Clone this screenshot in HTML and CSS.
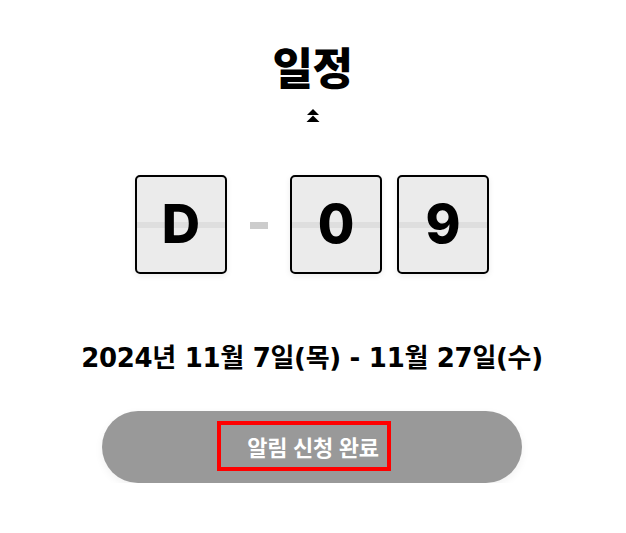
FILE: index.html
```html
<!DOCTYPE html>
<html lang="ko">
<head>
<meta charset="utf-8">
<link rel="stylesheet" href="styles.css">
</head>
<body>
<main class="schedule">
  <h1 class="title">일정</h1>
  <svg class="chevrons" width="14" height="14" viewBox="0 0 14 14" aria-hidden="true">
    <polygon points="7,0 13,6 1,6" fill="#000"/>
    <polygon points="7,6.5 13.5,13 0.5,13" fill="#000"/>
  </svg>
  <div class="countdown">
    <div class="card">D</div>
    <div class="dash"></div>
    <div class="card">0</div>
    <div class="card">9</div>
  </div>
  <p class="period">2024년 11월 7일(목) - 11월 27일(수)</p>
  <button class="notify" type="button"><span class="notify-label">알림 신청 완료</span></button>
</main>
</body>
</html>
```

FILE: styles.css
```css
* { box-sizing: border-box; }
html, body { margin: 0; padding: 0; background: #fff; }
body {
  font-family: Inter, "Noto Sans CJK KR", sans-serif;
  color: #000;
}
.schedule {
  display: flex;
  flex-direction: column;
  align-items: center;
  padding-top: 38px;
}
.title {
  margin: 0 0 0 -1px;
  font-family: "Noto Sans CJK KR", sans-serif;
  font-weight: 900;
  font-size: 44px;
  line-height: 56px;
  letter-spacing: -0.5px;
}
.chevrons {
  display: block;
  margin-top: 15px;
}
.countdown {
  display: flex;
  align-items: center;
  margin-top: 52px;
  margin-left: -2px;
}
.card {
  width: 92px;
  height: 99px;
  border: 2px solid #000;
  border-radius: 5px;
  background: linear-gradient(to bottom, #ebebeb 0, #ebebeb 45px, #dedede 45px, #dedede 51px, #ebebeb 51px);
  box-shadow: 0 2px 6px rgba(0,0,0,0.08);
  display: flex;
  align-items: center;
  justify-content: center;
  font-family: Inter, sans-serif;
  font-weight: 800;
  font-size: 53px;
  line-height: 1;
}
.card + .card { margin-left: 15px; }
.dash {
  width: 18px;
  height: 7px;
  background: #cccccc;
  margin: 2px 22px 0 23px;
}
.period {
  margin: 66px 0 0 -2px;
  font-family: "DejaVu Sans", "Noto Sans CJK KR", sans-serif;
  font-weight: 700;
  font-size: 26px;
  line-height: 36px;
  letter-spacing: -0.3px;
}
.notify {
  margin-top: 35px;
  margin-left: -2px;
  width: 420px;
  height: 72px;
  border: 0;
  border-radius: 36px;
  background: #999999;
  box-shadow: 0 3px 8px rgba(0,0,0,0.06);
  display: flex;
  align-items: center;
  justify-content: center;
  padding: 0;
}
.notify-label {
  display: inline-block;
  border: 4px solid #ff0000;
  padding: 0 8px 0 26px;
  height: 50px;
  line-height: 42px;
  margin-right: 16px;
  margin-top: -2px;
  color: #fff;
  font-family: "Noto Sans CJK KR", sans-serif;
  font-weight: 700;
  font-size: 22px;
  letter-spacing: -0.3px;
}
```
